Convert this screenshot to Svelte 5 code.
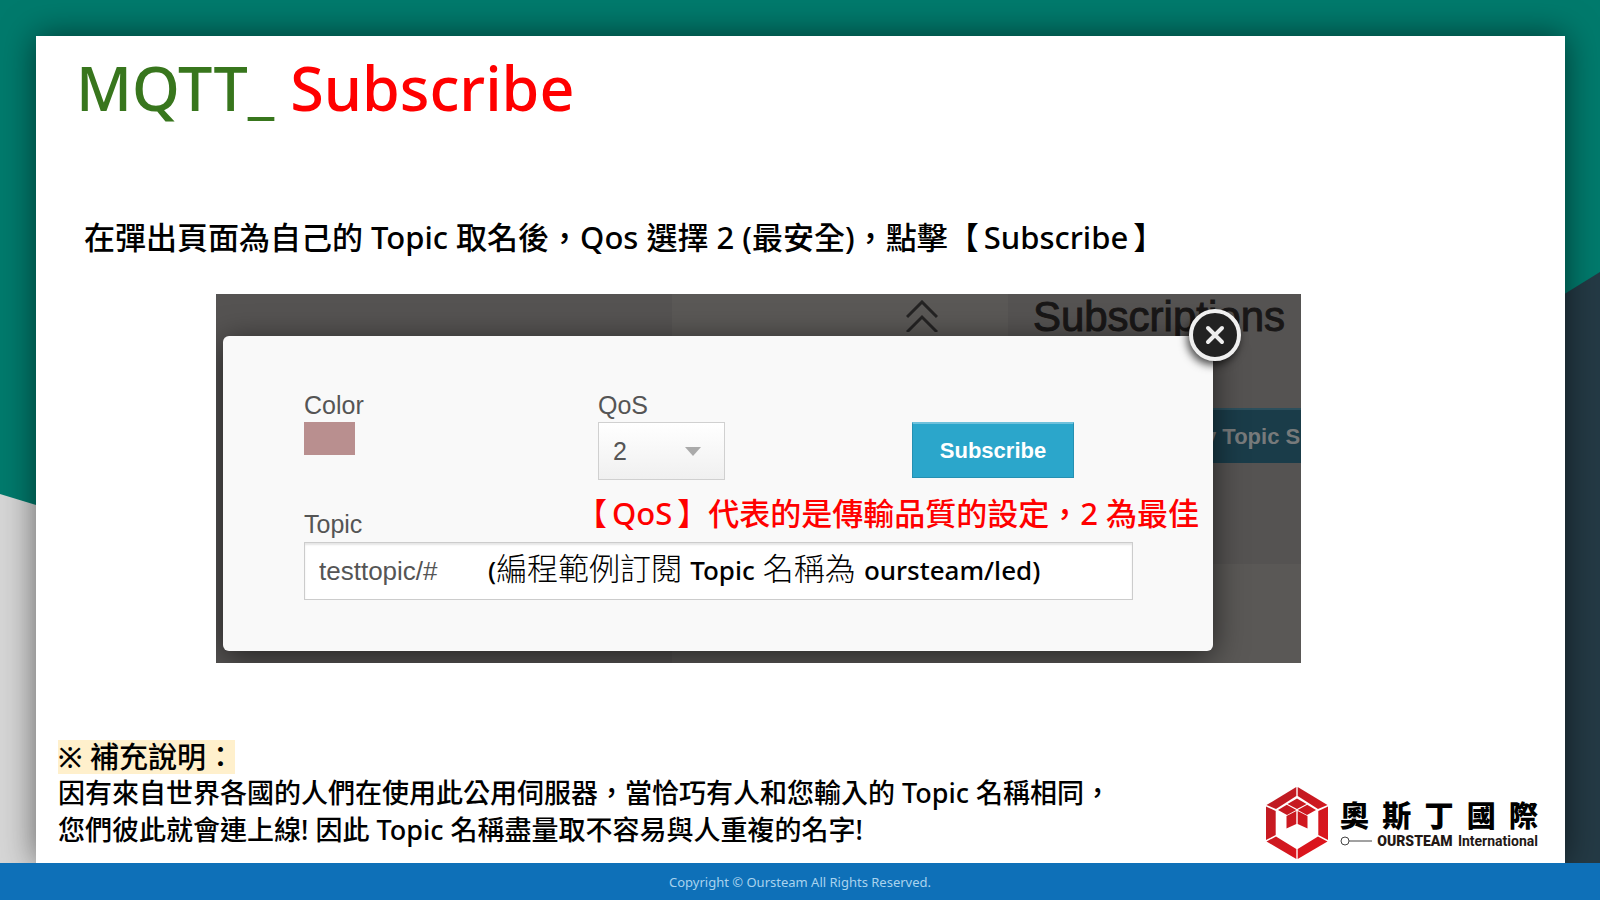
<script lang="ts">
  const brand = [..."奧斯丁國際"];
  const levels = ["0", "1", "2"];

  let qos = $state("2");
  let topic = $state("testtopic/#");
</script>

<div class="slide" lang="zh-Hant">
  <svg class="backdrop" viewBox="0 0 1600 900" preserveAspectRatio="none" aria-hidden="true">
    <rect width="1600" height="900" fill="#007a6c" />
    <path d="M0 494 L800 738 V900 H0Z" fill="#d6d6d6" />
    <path d="M1600 272 L700 830 V900 H1600Z" fill="#243a45" />
  </svg>

  <main class="paper">
    <h1>MQTT_ <span>Subscribe</span></h1>

    <p class="lead">
      在彈出頁面為自己的 Topic 取名後，Qos 選擇 2 (最安全)，點擊【<span class="term">Subscribe</span>】
    </p>

    <section class="shot">
      <div class="behind">
        <svg class="collapse" viewBox="0 0 32 32" aria-hidden="true">
          <path d="M1 17 L16 2 L31 17 M1 32 L16 17 L31 32" />
        </svg>
        <h2>Subscriptions</h2>
        <div class="new-topic">y Topic S</div>
        <div class="messages"></div>
      </div>

      <form class="dialog" onsubmit={(e) => e.preventDefault()}>
        <button type="button" class="close" aria-label="Close">
          <svg viewBox="0 0 20 20"><path d="M3 3 L17 17 M17 3 L3 17" /></svg>
        </button>

        <div class="fields">
          <div class="field">
            <label for="color">Color</label>
            <button type="button" id="color" class="swatch" aria-label="Color"></button>
          </div>
          <div class="field">
            <label for="qos">QoS</label>
            <div class="select">
              <select id="qos" bind:value={qos}>
                {#each levels as level}
                  <option value={level}>{level}</option>
                {/each}
              </select>
            </div>
          </div>
          <button type="submit" class="subscribe">Subscribe</button>
        </div>

        <div class="topic-head">
          <label for="topic">Topic</label>
          <p class="qos-note">【<span class="term">QoS</span>】代表的是傳輸品質的設定，2 為最佳</p>
        </div>
        <div class="topic">
          <input id="topic" type="text" bind:value={topic} />
          <p class="hint"><span>(</span>編程範例訂閱 <span>Topic</span> 名稱為 <span>oursteam/led)</span></p>
        </div>
      </form>
    </section>

    <div class="bottom">
      <div class="notes">
        <h3><mark>※ 補充說明：</mark></h3>
        <p>因有來自世界各國的人們在使用此公用伺服器，當恰巧有人和您輸入的 Topic 名稱相同，</p>
        <p>您們彼此就會連上線! 因此 Topic 名稱盡量取不容易與人重複的名字!</p>
      </div>

      <div class="logo">
        <svg class="mark" viewBox="0 0 62 72" aria-hidden="true">
          <defs>
            <linearGradient id="red" x1="0" y1="0" x2="62" y2="72" gradientUnits="userSpaceOnUse">
              <stop offset="0" stop-color="#b81d24" />
              <stop offset="1" stop-color="#e4131b" />
            </linearGradient>
          </defs>
          <g fill="url(#red)">
            <path d="M30.3 0 V9 L10 22 L0.5 18Z" />
            <path d="M31.7 0 V9 L52 22 L61.5 18Z" />
            <path d="M0 19.5 L9.7 24 V48 L0 53Z" />
            <path d="M62 19.5 L52.3 24 V48 L62 53Z" />
            <path d="M0.5 54.5 L10 49.5 L30.3 62 V72Z" />
            <path d="M61.5 54.5 L52 49.5 L31.7 62 V72Z" />
            <path d="M31 11.5 L40.5 17 L31 22 L21.5 17Z" />
            <path d="M20.8 17.8 L30.3 23 L21 28 L12 23Z" />
            <path d="M41.2 17.8 L31.7 23 L41 28 L50 23Z" />
            <path d="M30.3 24 V37 L20.5 41.5 V29Z" />
            <path d="M31.7 24 V37 L41.5 41.5 V29Z" />
          </g>
        </svg>
        <div class="brand">
          <div class="name">
            {#each brand as char}
              <span>{char}</span>
            {/each}
          </div>
          <div class="tagline">
            <svg viewBox="0 0 32 10" aria-hidden="true">
              <circle cx="5" cy="5" r="4" />
              <path d="M9 5 H32" />
            </svg>
            <b>OURSTEAM</b>
            <span>International</span>
          </div>
        </div>
      </div>
    </div>
  </main>

  <footer>Copyright © Oursteam All Rights Reserved.</footer>
</div>

<style>
  :global(body) {
    margin: 0;
  }
  .slide {
    position: relative;
    display: flex;
    flex-direction: column;
    min-height: 100vh;
    overflow: hidden;
    color: #000;
    font-family: "Noto Sans", "Noto Sans CJK TC", sans-serif;
    font-weight: 500;
  }
  h1, h2, h3, p {
    margin: 0;
    font-weight: inherit;
  }
  .backdrop {
    position: absolute;
    inset: 0;
    width: 100%;
    height: 100%;
  }
  .paper {
    position: relative;
    flex: 1;
    display: flex;
    flex-direction: column;
    box-sizing: border-box;
    margin: 36px 35px 0 36px;
    padding-bottom: 4px;
    background: #fff;
    box-shadow: 0 0 32px rgba(0, 0, 0, 0.55);
  }
  h1 {
    margin: 10px 0 0 40px;
    font-size: 61px;
    line-height: 84px;
    color: #38761d;
  }
  h1 span {
    color: #f00;
  }
  .lead {
    margin: 85px 0 0 48px;
    font-size: 31px;
    line-height: 44px;
    white-space: nowrap;
  }
  .term {
    padding: 0 5px;
  }

  .shot {
    position: relative;
    box-sizing: border-box;
    margin: 35px 264px 0 180px;
    padding: 42px 88px 12px 7px;
    overflow: hidden;
    background: #575553;
    font-family: "Liberation Sans", "Noto Sans CJK TC", sans-serif;
    font-weight: 400;
  }
  .behind {
    position: absolute;
    inset: 0;
    background: linear-gradient(90deg, #555352 42%, #5a5856 42% 73%, #555352 73%);
  }
  .collapse {
    position: absolute;
    top: 6px;
    right: 363px;
    width: 32px;
    height: 32px;
    fill: none;
    stroke: #242323;
    stroke-width: 3;
  }
  h2 {
    position: absolute;
    top: -1px;
    right: 16px;
    font-size: 42px;
    line-height: 48px;
    color: #191717;
    -webkit-text-stroke: 1px #191717;
  }
  .new-topic {
    position: absolute;
    top: 114px;
    right: 0;
    box-sizing: border-box;
    width: 108px;
    height: 55px;
    overflow: hidden;
    border-top: 2px solid #2c4f5c;
    background: #1a3c49;
    color: #777a7b;
    font-size: 22px;
    font-weight: 700;
    line-height: 53px;
    white-space: nowrap;
    text-indent: 11px;
  }
  .messages {
    position: absolute;
    top: 270px;
    right: 0;
    bottom: 0;
    width: 27%;
    background: #5a5856;
  }

  .dialog {
    position: relative;
    box-sizing: border-box;
    padding: 53px 14px 51px 81px;
    border-radius: 6px;
    background: #f9f9f9;
    box-shadow: 0 6px 32px rgba(0, 0, 0, 0.6);
    color: #555;
    font-size: 25px;
    line-height: 32px;
  }
  .close {
    position: absolute;
    top: -27px;
    right: -28px;
    display: grid;
    place-items: center;
    box-sizing: border-box;
    width: 52px;
    height: 52px;
    padding: 0;
    border: 4px solid #f0f0f0;
    border-radius: 50%;
    background: #222;
    box-shadow: -2px 4px 8px rgba(0, 0, 0, 0.7);
    cursor: pointer;
  }
  .close svg {
    width: 20px;
    height: 20px;
    stroke: #eee;
    stroke-width: 4;
    stroke-linecap: round;
  }
  .fields {
    display: grid;
    grid-template-columns: 294px 314px 162px;
    align-items: start;
  }
  .field label {
    display: block;
    margin-bottom: 1px;
  }
  .swatch {
    display: block;
    width: 51px;
    height: 33px;
    padding: 0;
    border: 0;
    background: #b98f8f;
    cursor: pointer;
  }
  .select {
    position: relative;
    width: 127px;
  }
  .select::after {
    content: "";
    position: absolute;
    top: 25px;
    right: 24px;
    border: 8px solid transparent;
    border-top: 9px solid #aaa;
    border-bottom: 0;
    pointer-events: none;
  }
  select {
    display: block;
    width: 100%;
    height: 58px;
    padding: 0 14px;
    appearance: none;
    border: 1px solid #d0d0d0;
    border-radius: 0;
    background: linear-gradient(#fff, #f0f0f0);
    color: #555;
    font: inherit;
  }
  .subscribe {
    height: 56px;
    margin-top: 33px;
    padding: 0;
    border: 1px solid #2590b2;
    border-top: 2px solid #6fc1dc;
    background: #2ba6cb;
    color: #fff;
    font: 700 22px "Liberation Sans", sans-serif;
    cursor: pointer;
  }
  .topic-head {
    display: flex;
    align-items: flex-end;
    justify-content: space-between;
    box-sizing: border-box;
    margin-top: 11px;
    height: 51px;
    padding-bottom: 2px;
  }
  .qos-note {
    align-self: flex-start;
    color: #f00;
    font-family: "Noto Sans", "Noto Sans CJK TC", sans-serif;
    font-size: 31px;
    font-weight: 500;
    line-height: 44px;
    white-space: nowrap;
  }
  .topic {
    position: relative;
    margin-right: 66px;
  }
  input {
    display: block;
    box-sizing: border-box;
    width: 100%;
    height: 58px;
    padding: 0 14px;
    border: 1px solid #ccc;
    border-radius: 0;
    background: #fff;
    box-shadow: inset 0 2px 2px rgba(0, 0, 0, 0.1);
    color: #555;
    font: 26px "Liberation Sans", sans-serif;
  }
  .hint {
    position: absolute;
    top: 4px;
    left: 184px;
    color: #000;
    font-family: "Noto Sans", "Noto Sans CJK TC", sans-serif;
    font-size: 31px;
    font-weight: 300;
    line-height: 44px;
    white-space: nowrap;
    pointer-events: none;
  }
  .hint span {
    font-size: 26px;
    font-weight: 500;
  }

  .bottom {
    flex: 1;
    display: flex;
    align-items: flex-end;
    justify-content: space-between;
    padding: 0 27px 0 22px;
  }
  .notes {
    padding-bottom: 11px;
    font-size: 27px;
    line-height: 37px;
    white-space: nowrap;
  }
  h3 {
    font-size: 29px;
    line-height: 34px;
  }
  mark {
    display: inline-block;
    background: #fff0cc;
    color: inherit;
  }
  .logo {
    display: flex;
    align-items: center;
    gap: 12px;
  }
  .mark {
    width: 62px;
    height: 72px;
  }
  .brand {
    width: 198px;
  }
  .name {
    display: flex;
    justify-content: space-between;
    font-family: "Noto Sans CJK TC", sans-serif;
    font-size: 29px;
    font-weight: 900;
    line-height: 36px;
  }
  .tagline {
    display: flex;
    align-items: center;
    justify-content: space-between;
    color: #231815;
    font-family: Roboto, sans-serif;
    font-size: 14px;
    font-weight: 700;
    line-height: 18px;
  }
  .tagline svg {
    width: 32px;
    height: 10px;
    fill: none;
    stroke: #444;
  }
  footer {
    position: relative;
    height: 37px;
    background: #0e70b8;
    color: #a9d3ee;
    font-size: 13px;
    font-weight: 400;
    line-height: 38px;
    text-align: center;
  }
</style>
